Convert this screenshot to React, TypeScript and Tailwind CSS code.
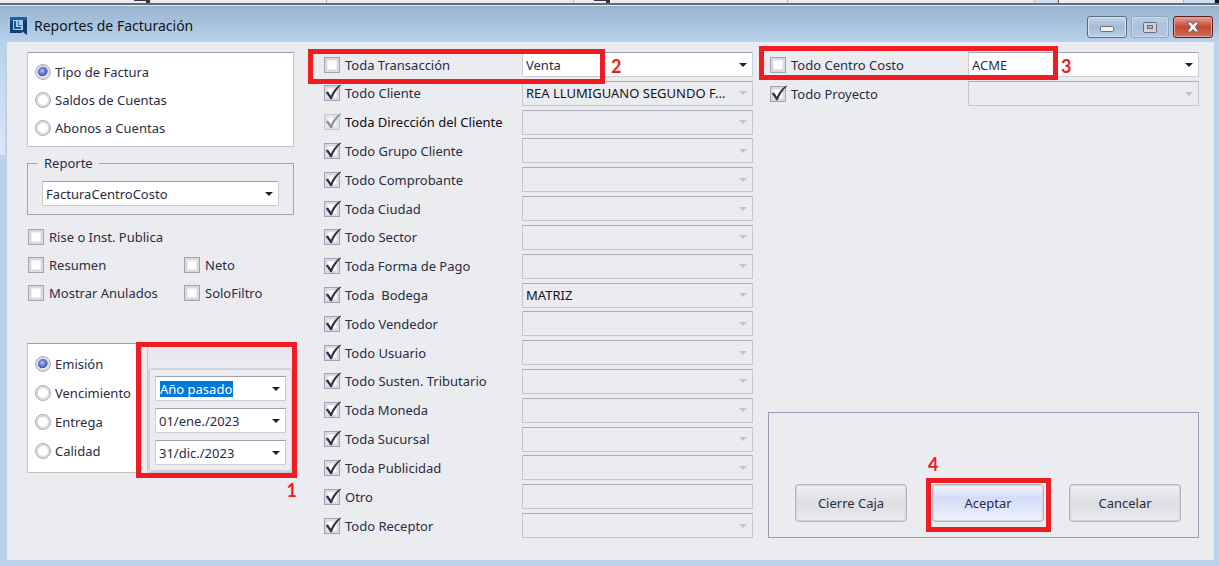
import { useState } from "react";
import type { ReactNode } from "react";
import clsx from "clsx";

type Filter = {
    label: string;
    value?: string;
    checked?: boolean;
    disabled?: boolean;
    text?: boolean;
};

const filters: Filter[] = [
    { label: "Toda Transacción", value: "Venta", checked: false },
    { label: "Todo Cliente", value: "REA LLUMIGUANO SEGUNDO F..." },
    { label: "Toda Dirección del Cliente", disabled: true },
    { label: "Todo Grupo Cliente" },
    { label: "Todo Comprobante" },
    { label: "Toda Ciudad" },
    { label: "Todo Sector" },
    { label: "Toda Forma de Pago" },
    { label: "Toda  Bodega", value: "MATRIZ" },
    { label: "Todo Vendedor" },
    { label: "Todo Usuario" },
    { label: "Todo Susten. Tributario" },
    { label: "Toda Moneda" },
    { label: "Toda Sucursal" },
    { label: "Toda Publicidad" },
    { label: "Otro", text: true },
    { label: "Todo Receptor" },
];

const costFilters: Filter[] = [
    { label: "Todo Centro Costo", value: "ACME", checked: false },
    { label: "Todo Proyecto" },
];

function Arrow({ dim }: { dim?: boolean }) {
    return (
        <svg
            className={clsx("pointer-events-none shrink-0", dim ? "text-[#c3c4ca]" : "text-[#1f2035]")}
            width="8"
            height="4"
            viewBox="0 0 8 4"
            aria-hidden="true"
        >
            <path d="M0 0h8L4 4z" fill="currentColor" />
        </svg>
    );
}

function Check({ label, checked = false, disabled }: { label: string; checked?: boolean; disabled?: boolean }) {
    const [on, setOn] = useState(checked);

    return (
        <label className={clsx("flex items-center gap-[5px] whitespace-pre", disabled && "text-[#0c0c14]")}>
            <span className={clsx("relative size-4 shrink-0", disabled && "opacity-50")}>
                <input
                    type="checkbox"
                    checked={on}
                    disabled={disabled}
                    onChange={(e) => setOn(e.target.checked)}
                    className="block size-4 appearance-none border border-[#a3a4b2] bg-white shadow-[inset_0_0_0_2px_#d9dae1,inset_0_0_0_3px_#ececf1]"
                />
                {on && (
                    <svg
                        className="pointer-events-none absolute -top-px left-0"
                        width="18"
                        height="17"
                        viewBox="0 0 18 17"
                        aria-hidden="true"
                    >
                        <path d="M1.8 8.6l2.2-1 2.9 4.2C9 7 12 3 16.6.6l.4.7C12.8 5.2 9.8 10 7.8 15.2H6.4z" fill="#30304a" />
                    </svg>
                )}
            </span>
            {label}
        </label>
    );
}

function Radio({ name, label, checked }: { name: string; label: string; checked?: boolean }) {
    return (
        <label className="flex items-center gap-1">
            <input
                type="radio"
                name={name}
                defaultChecked={checked}
                className="size-4 shrink-0 appearance-none rounded-full border border-[#a9aab6] bg-white shadow-[inset_0_0_0_2px_#dadbe2] checked:bg-[radial-gradient(circle_at_45%_42%,#b9ccf5_0,#5b79cf_28%,#4560b8_45%,#fff_52%)]"
            />
            {label}
        </label>
    );
}

function Combo({ name, value = "", disabled, selected }: { name: string; value?: string; disabled?: boolean; selected?: boolean }) {
    return (
        <div
            className={clsx(
                "relative flex h-[25px] flex-1 items-center border",
                disabled
                    ? "border-[#c6c7ce] border-t-[#adaeb9] text-[#14141c]"
                    : "border-[#cccdd5] border-t-[#a0a2b0] bg-white",
            )}
        >
            <select
                aria-label={name}
                disabled={disabled}
                className={clsx(
                    "appearance-none truncate opacity-100 outline-none",
                    selected ? "ml-1 h-4 w-[73px] bg-[#0078d7] leading-4 text-white" : "h-full w-full pr-5 pl-[3px]",
                )}
            >
                <option>{value}</option>
            </select>
            <span className="pointer-events-none absolute right-[5px]">
                <Arrow dim={disabled} />
            </span>
        </div>
    );
}

function FilterRow({ filter, children }: { filter: Filter; children?: ReactNode }) {
    const { label, value, checked = true, disabled, text } = filter;

    return (
        <div className="relative flex items-center">
            <div className="w-[198px] shrink-0">
                <Check label={label} checked={checked} disabled={disabled} />
            </div>
            {text ? (
                <input
                    type="text"
                    aria-label={label}
                    disabled
                    className="h-[25px] min-w-0 flex-1 border border-[#c6c7ce] border-t-[#adaeb9] px-1"
                />
            ) : (
                <Combo name={label} value={value} disabled={checked} />
            )}
            {children}
        </div>
    );
}

function PushButton({ children, primary }: { children: ReactNode; primary?: boolean }) {
    return (
        <button
            type="button"
            className={clsx(
                "h-[38px] w-[112px] rounded-[4px] border border-[#b4b5bc] bg-linear-to-b shadow-[inset_0_0_0_1px_#d3d4da]",
                primary
                    ? "from-[#f5f7fd] via-[#d3dcfa] via-35% to-[#eef2fd]"
                    : "from-[#f0f1f3] via-[#dcdee2] via-50% to-[#ebecee]",
            )}
        >
            {children}
        </button>
    );
}

function Step({ n, box, at }: { n: number; box: string; at: string }) {
    return (
        <>
            <div className={clsx("pointer-events-none absolute z-10 border-[5px] border-[#ee1c23]", box)} />
            <span
                className={clsx(
                    "pointer-events-none absolute z-10 font-['Lato','Noto_Sans',sans-serif] text-lg leading-5 font-bold text-[#ee1c23]",
                    at,
                )}
            >
                {n}
            </span>
        </>
    );
}

function TitleBar() {
    return (
        <header className="flex h-9 items-center justify-between bg-linear-to-b from-[#99b4d0] to-[#b9d1ea] pr-1.5 pl-2.5">
            <div className="flex items-center gap-1.5 pt-1">
                <svg width="18" height="18" viewBox="0 0 18 18" aria-hidden="true">
                    <path d="M0 0h17v3H3v10h10v2H0z" fill="#1464ac" />
                    <path d="M0 4h3v9h9v3H0z" fill="#163f78" />
                    <path d="M13 3h4v15l-4-3z" fill="#153a6b" />
                    <path d="M3 3h10v10H3z" fill="#a9c9e8" />
                    <path d="M4 4h2v6h5v2H4z" fill="#1c5796" />
                    <path d="M8 4h1v4h3v1H8z" fill="#2d78b8" />
                </svg>
                <h1 className="text-sm leading-5 text-[#10141c]">Reportes de Facturación</h1>
            </div>

            <div className="flex items-center gap-1 pt-1.5">
                <button
                    type="button"
                    aria-label="Minimizar"
                    className="flex h-[22px] w-10 items-center justify-center rounded-[3px] border border-[#5a6b80] bg-linear-to-b from-[#c3d5e8] via-[#a3bbd5] via-50% to-[#b9d0e8] pt-1 shadow-[inset_0_0_0_1px_#d5e3f2]"
                >
                    <svg width="14" height="6" viewBox="0 0 14 6" aria-hidden="true">
                        <rect x="0.5" y="0.5" width="13" height="5" rx="1" fill="#f2f2f2" stroke="#6a6d76" />
                    </svg>
                </button>
                <button
                    type="button"
                    aria-label="Maximizar"
                    className="flex h-[22px] w-[38px] items-center justify-center rounded-[3px] border border-[#91a7c0] bg-linear-to-b from-[#b9cee4] via-[#a9c1da] via-50% to-[#b4cbe3] shadow-[inset_0_0_0_1px_#c9daec]"
                >
                    <svg width="14" height="11" viewBox="0 0 14 11" aria-hidden="true">
                        <rect x="0.5" y="0.5" width="13" height="10" rx="1" fill="#cfd2d8" stroke="#6a6d76" />
                        <rect x="4.5" y="3.5" width="5" height="3" fill="#9db5cf" stroke="#6a6d76" />
                    </svg>
                </button>
                <button
                    type="button"
                    aria-label="Cerrar"
                    className="flex h-[22px] w-10 items-center justify-center rounded-[3px] border border-[#5c1f1d] bg-linear-to-b from-[#e2a397] via-[#c2452f] via-50% to-[#d0705a] shadow-[inset_0_0_0_1px_#e3a596]"
                >
                    <svg width="14" height="12" viewBox="0 0 14 12" aria-hidden="true">
                        <path
                            d="M1 1h4l2 2.500L9 1h4L9.500 6l3.500 5H9L7 8.500 5 11H1l3.500-5z"
                            fill="#f4f4f4"
                            stroke="#6b5f68"
                            strokeLinejoin="round"
                        />
                    </svg>
                </button>
            </div>
        </header>
    );
}

export default function App() {
    return (
        <div className="flex min-h-screen flex-col bg-[#b9d1ea] font-['Noto_Sans','Open_Sans',sans-serif] text-[13px] leading-4 text-[#2b2b45]">

            {/* Edge of the form behind the window */}
            <div className="flex h-[5px] border-b-2 border-[#6c6c70] bg-[#ebebf0]">
                <div className="flex w-[327px] justify-center border-r border-[#b9b9c2]">
                    <div className="ml-[-42px] w-4 border-t border-r-4 border-[#35354d]" />
                </div>
                <div className="w-[247px] border-r border-[#b9b9c2]" />
                <div className="w-[214px] border-r border-[#b9b9c2] pl-5">
                    <div className="h-full w-4 border-t border-r-4 border-[#35354d]" />
                </div>
                <div className="flex-1" />
                <div className="w-6 border-x border-[#b9b9c2] bg-[#cfe0f2]" />
                <div className="w-[125px] border-l border-[#6c6c70]" />
                <div className="w-8 border-x border-[#b9b9c2] bg-[#cfe0f2]" />
                <div className="w-1 bg-[#101428]" />
            </div>
            <div className="h-px bg-[#dfe9f4]" />

            <TitleBar />

            <div className="flex flex-1 pr-[5px] pb-1.5">
                <div className="w-[7px] shrink-0 pr-0.5">
                    <div className="h-[113px] bg-linear-to-b from-[#b9d1ea] to-[#dce8f6]" />
                </div>

                <main className="grid flex-1 grid-cols-[297fr_444fr_431fr] bg-[#ebecef] pt-2.5 pr-[15px] pb-[22px] pl-5">

                    {/* Report type, flags and dates */}
                    <section className="flex flex-col pr-[30px]">
                        <div className="flex h-[95px] flex-col border border-[#c3c4cc] border-t-[#9b9dab] bg-white px-[7px] pt-[5px]">
                            {["Tipo de Factura", "Saldos de Cuentas", "Abonos a Cuentas"].map((label, i) => (
                                <div key={label} className="flex h-7 items-center">
                                    <Radio name="tipo" label={label} checked={i === 0} />
                                </div>
                            ))}
                        </div>

                        <fieldset className="mt-2 border border-[#a0a3b2] px-3.5 pt-2.5 pb-2">
                            <legend className="-ml-1 px-1.5">Reporte</legend>
                            <div className="flex">
                                <Combo name="Reporte" value="FacturaCentroCosto" />
                            </div>
                        </fieldset>

                        <div className="mt-2 grid auto-rows-[28px] grid-cols-[156px_1fr] items-center pl-px">
                            <div className="col-span-2">
                                <Check label="Rise o Inst. Publica" />
                            </div>
                            <Check label="Resumen" />
                            <Check label="Neto" />
                            <Check label="Mostrar Anulados" />
                            <Check label="SoloFiltro" />
                        </div>

                        <div className="mt-9 flex">
                            <div className="w-[115px] border border-[#c3c4cc] border-t-[#9b9dab] bg-white px-[7px] pt-[5px]">
                                {["Emisión", "Vencimiento", "Entrega", "Calidad"].map((label, i) => (
                                    <div key={label} className="flex h-[29px] items-center">
                                        <Radio name="fecha" label={label} checked={i === 0} />
                                    </div>
                                ))}
                            </div>

                            <div className="relative ml-[5px] flex-1 border border-[#c6c7ce] bg-linear-to-b from-[#e3e5e8] to-[#ebecef] to-20%">
                                <div className="h-6" />
                                <div className="flex flex-col gap-[7px] rounded-[4px] border-2 border-[#d2d3d9] bg-[#ebecef] px-[5px] pt-1.5 pb-[5px]">
                                    <div className="flex">
                                        <Combo name="Periodo" value="Año pasado" selected />
                                    </div>
                                    <div className="flex">
                                        <Combo name="Desde" value="01/ene./2023" />
                                    </div>
                                    <div className="flex">
                                        <Combo name="Hasta" value="31/dic./2023" />
                                    </div>
                                </div>
                                <Step n={1} box="-top-0.5 -right-1 -bottom-1.5 -left-3" at="-right-1 -bottom-7" />
                            </div>
                        </div>
                    </section>

                    {/* Filters */}
                    <section className="flex flex-col justify-between pr-[15px]">
                        {filters.map((filter, i) => (
                            <FilterRow key={filter.label} filter={filter}>
                                {i === 0 && <Step n={2} box="-top-[3px] -left-4 h-[35px] w-[297px]" at="top-1 left-[287px]" />}
                            </FilterRow>
                        ))}
                    </section>

                    {/* Cost centre and actions */}
                    <section className="flex flex-col justify-between">
                        <div className="flex flex-col gap-1 pl-0.5">
                            {costFilters.map((filter, i) => (
                                <FilterRow key={filter.label} filter={filter}>
                                    {i === 0 && <Step n={3} box="-top-1.5 -left-[11px] h-[34px] w-[299px]" at="top-1 left-[291px]" />}
                                </FilterRow>
                            ))}
                        </div>

                        <div className="flex h-[126px] items-end justify-between border border-[#9a9db3] pr-[17px] pb-[15px] pl-[26px]">
                            <PushButton>Cierre Caja</PushButton>
                            <div className="relative">
                                <PushButton primary>Aceptar</PushButton>
                                <Step n={4} box="-top-1.5 -right-[7px] -bottom-2.5 -left-1.5" at="-top-[30px] -left-1" />
                            </div>
                            <PushButton>Cancelar</PushButton>
                        </div>
                    </section>

                </main>
            </div>

        </div>
    );
}
